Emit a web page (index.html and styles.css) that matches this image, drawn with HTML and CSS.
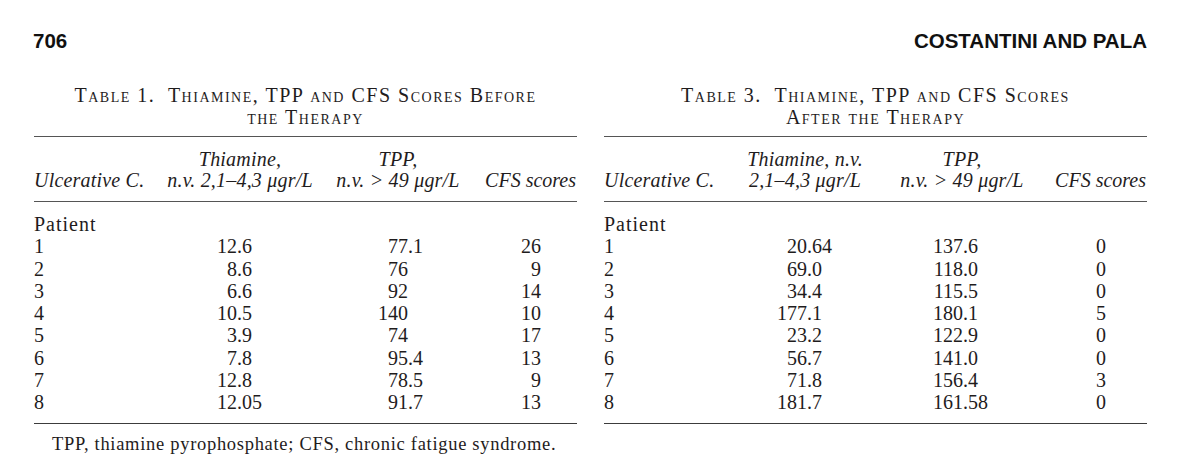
FILE: index.html
```html
<!DOCTYPE html>
<html lang="en">
<head>
<meta charset="utf-8">
<title>Costantini and Pala – Tables 1 and 3</title>
<link rel="stylesheet" href="styles.css">
</head>
<body>
<div class="page">
  <header class="running-head">
    <span class="folio">706</span>
    <span class="authors">COSTANTINI AND PALA</span>
  </header>

  <div class="tables">
    <section class="block t1">
      <h2 class="caption">Table 1.&nbsp; Thiamine, TPP and CFS Scores Before<br>the Therapy</h2>
      <table class="data">
        <colgroup><col class="c1"><col class="c2"><col class="c3"><col class="c4"></colgroup>
        <thead>
          <tr class="h1"><th></th><th>Thiamine,</th><th>TPP,</th><th></th></tr>
          <tr class="h2"><th class="l">Ulcerative C.</th><th>n.v. 2,1–4,3 μgr/L</th><th>n.v. &gt; 49 μgr/L</th><th class="r">CFS scores</th></tr>
        </thead>
        <tbody>
          <tr class="first"><td class="label">Patient</td><td></td><td></td><td></td></tr>
          <tr><td>1</td><td class="n2"><span class="int">12</span>.6</td><td class="n3"><span class="int">77</span>.1</td><td class="n4">26</td></tr>
          <tr><td>2</td><td class="n2"><span class="int">8</span>.6</td><td class="n3"><span class="int">76</span></td><td class="n4">9</td></tr>
          <tr><td>3</td><td class="n2"><span class="int">6</span>.6</td><td class="n3"><span class="int">92</span></td><td class="n4">14</td></tr>
          <tr><td>4</td><td class="n2"><span class="int">10</span>.5</td><td class="n3"><span class="int">140</span></td><td class="n4">10</td></tr>
          <tr><td>5</td><td class="n2"><span class="int">3</span>.9</td><td class="n3"><span class="int">74</span></td><td class="n4">17</td></tr>
          <tr><td>6</td><td class="n2"><span class="int">7</span>.8</td><td class="n3"><span class="int">95</span>.4</td><td class="n4">13</td></tr>
          <tr><td>7</td><td class="n2"><span class="int">12</span>.8</td><td class="n3"><span class="int">78</span>.5</td><td class="n4">9</td></tr>
          <tr class="last"><td>8</td><td class="n2"><span class="int">12</span>.05</td><td class="n3"><span class="int">91</span>.7</td><td class="n4">13</td></tr>
        </tbody>
      </table>
      <p class="footnote">TPP, thiamine pyrophosphate; CFS, chronic fatigue syndrome.</p>
    </section>

    <section class="block t3">
      <h2 class="caption">Table 3.&nbsp; Thiamine, TPP and CFS Scores<br>After the Therapy</h2>
      <table class="data">
        <colgroup><col class="c1"><col class="c2"><col class="c3"><col class="c4"></colgroup>
        <thead>
          <tr class="h1"><th></th><th>Thiamine, n.v.</th><th>TPP,</th><th></th></tr>
          <tr class="h2"><th class="l">Ulcerative C.</th><th>2,1–4,3 μgr/L</th><th>n.v. &gt; 49 μgr/L</th><th class="r">CFS scores</th></tr>
        </thead>
        <tbody>
          <tr class="first"><td class="label">Patient</td><td></td><td></td><td></td></tr>
          <tr><td>1</td><td class="n2"><span class="int">20</span>.64</td><td class="n3"><span class="int">137</span>.6</td><td class="n4">0</td></tr>
          <tr><td>2</td><td class="n2"><span class="int">69</span>.0</td><td class="n3"><span class="int">118</span>.0</td><td class="n4">0</td></tr>
          <tr><td>3</td><td class="n2"><span class="int">34</span>.4</td><td class="n3"><span class="int">115</span>.5</td><td class="n4">0</td></tr>
          <tr><td>4</td><td class="n2"><span class="int">177</span>.1</td><td class="n3"><span class="int">180</span>.1</td><td class="n4">5</td></tr>
          <tr><td>5</td><td class="n2"><span class="int">23</span>.2</td><td class="n3"><span class="int">122</span>.9</td><td class="n4">0</td></tr>
          <tr><td>6</td><td class="n2"><span class="int">56</span>.7</td><td class="n3"><span class="int">141</span>.0</td><td class="n4">0</td></tr>
          <tr><td>7</td><td class="n2"><span class="int">71</span>.8</td><td class="n3"><span class="int">156</span>.4</td><td class="n4">3</td></tr>
          <tr class="last"><td>8</td><td class="n2"><span class="int">181</span>.7</td><td class="n3"><span class="int">161</span>.58</td><td class="n4">0</td></tr>
        </tbody>
      </table>
    </section>
  </div>
</div>
</body>
</html>
```

FILE: styles.css
```css
html, body {
  margin: 0;
  padding: 0;
  background: #ffffff;
}

body {
  color: #1f1c1d;
  font-family: "Liberation Serif", "Times New Roman", serif;
  font-size: 20px;
}

.page {
  width: 1200px;
  height: 465px;
  box-sizing: border-box;
  padding: 29px 53px 0 33px;
  overflow: hidden;
}

.running-head {
  display: flex;
  justify-content: space-between;
  font-family: "Liberation Sans", Arial, sans-serif;
  font-weight: bold;
  font-size: 20.5px;
  line-height: 24px;
  color: #111;
}

.tables {
  display: flex;
  gap: 27px;
  margin-top: 31px;
}

.block {
  width: 543px;
  flex: none;
}

.t1 {
  margin-left: 1px;
}

.caption {
  margin: 0;
  padding-bottom: 8px;
  font-weight: normal;
  font-size: 20px;
  letter-spacing: 1.5px;
  line-height: 22px;
  font-variant: small-caps;
  text-align: center;
  white-space: nowrap;
  color: #1f1c1d;
}

.data {
  width: 543px;
  table-layout: fixed;
  border-collapse: separate;
  border-spacing: 0;
}

.data th,
.data td {
  padding: 0;
  white-space: nowrap;
}

.data th {
  font-style: italic;
  font-weight: normal;
  line-height: 21px;
  letter-spacing: 0.2px;
  text-align: center;
}

.data th.l { text-align: left; }
.data th.r { text-align: right; padding-right: 1px; letter-spacing: 0; }

.data .h1 th {
  border-top: 1.5px solid #555;
  padding-top: 12px;
}

.data .h2 th {
  border-bottom: 1.5px solid #555;
  padding-bottom: 9.5px;
}

.data td {
  line-height: 22.25px;
  text-align: left;
}

.data td.label { letter-spacing: 1px; }

.data .first td { padding-top: 11.5px; }

.data .last td {
  border-bottom: 1.5px solid #3c3c3c;
  padding-bottom: 10px;
}

.data td.n4 { text-align: right; }

.int {
  display: inline-block;
  text-align: right;
}

/* Table 1 columns */
.t1 .c1 { width: 116px; }
.t1 .c2 { width: 180px; }
.t1 .c3 { width: 136px; }
.t1 .c4 { width: 111px; }
.t1 .n2 .int { width: 87px; }
.t1 .n3 .int { width: 78px; }
.t1 td.n4 { padding-right: 36px; }

/* Table 3 columns */
.t3 .c1 { width: 126px; }
.t3 .c2 { width: 150px; }
.t3 .c3 { width: 164px; }
.t3 .c4 { width: 103px; }
.t3 .n2 .int { width: 77px; }
.t3 .n3 .int { width: 83px; }
.t3 td.n4 { padding-right: 41px; }

.footnote {
  margin: 9px 0 0 18px;
  font-size: 18.5px;
  letter-spacing: 0.7px;
  line-height: 22px;
}
```
